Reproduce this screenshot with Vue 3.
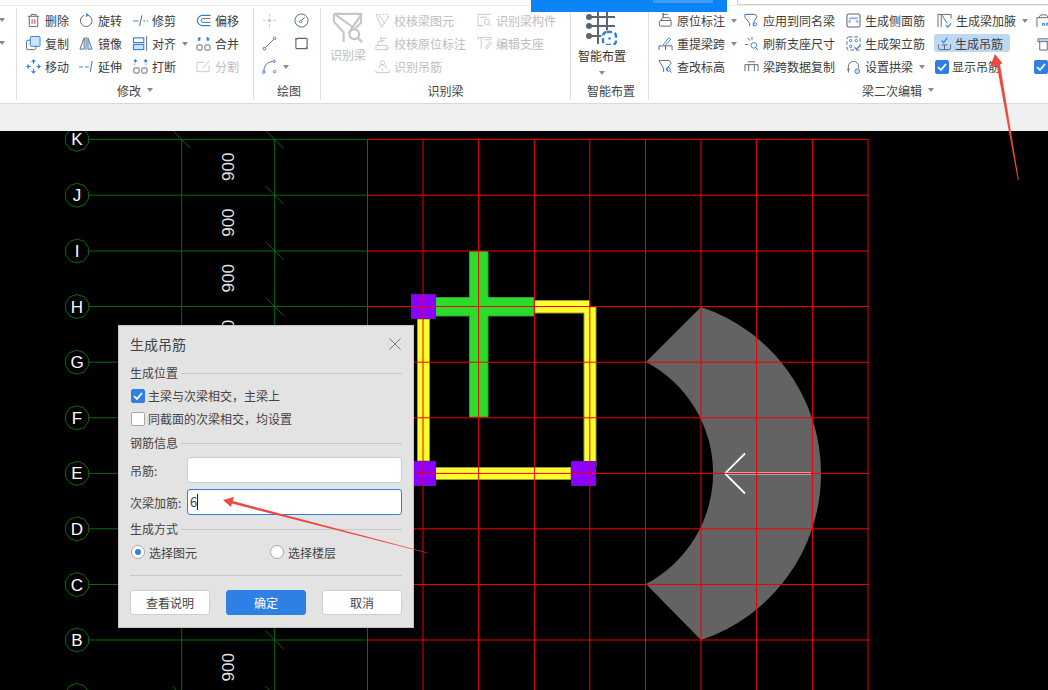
<script setup>
const B = '#2b80e6'
const icons = {
  del: `<path d="M2 3.5h12M5.5 3.5V1.5h5v2M3.5 3.5v11h9v-11"/><path stroke="#d8262c" d="M6.5 6.5v5M9.5 6.5v5"/>`,
  rotate: `<path d="M9.5 2.3A6.2 6.2 0 1 1 5.5 2.4"/><path fill="${B}" stroke="none" d="M7.5 0l3 2.2-3 2.2z"/>`,
  trim: `<path stroke="${B}" d="M0 8.5h6M11 8.5h2M14.5 8.5h1.5"/><path d="M9.5 2.5L7 14"/>`,
  offset: `<path stroke="${B}" stroke-width="1.2" d="M15.5 2.5H7a5.5 5.5 0 0 0 0 11h8.500"/><path d="M15.500 6H7.500a2 2 0 0 0 0 4h8"/>`,
  copy: `<rect x="0.500" y="4.500" width="10" height="10" rx="1.500"/><rect x="4.500" y="0.500" width="10.500" height="10.500" rx="1" fill="#cfe1f8" stroke="${B}"/>`,
  mirror: `<path d="M5.500 2L1 14h4.500zM7.500 1v14"/><path fill="#cfe1f8" stroke="${B}" d="M9.500 2L14 14H9.500z"/>`,
  align: `<rect x="0.500" y="2" width="11" height="5" stroke="${B}" stroke-width="1.200"/><rect x="0.500" y="9" width="11" height="5.500" fill="#cfe1f8" stroke="${B}" stroke-width="1.200"/><path d="M14.500 0v16"/>`,
  merge: `<rect x="1" y="9.500" width="5.500" height="5.500" rx="1"/><rect x="9.500" y="9.500" width="5.500" height="5.500" rx="1"/><path stroke="${B}" stroke-width="1.300" d="M2 2l2 2.500M4 1v3.500H2M14 2l-2 2.500M12 1v3.500h2"/>`,
  move: `<path stroke="${B}" stroke-width="1.200" d="M8 1v4M8 11v4M1 8h4M11 8h4M6 3l2-2 2 2M6 13l2 2 2-2M3 6L1 8l2 2M13 6l2 2-2 2"/>`,
  extend: `<path stroke="${B}" d="M0 8.500h4.500M6.500 8.500h4"/><path d="M14 2l-2 12"/>`,
  cut: `<rect x="1" y="9.500" width="5.500" height="5.500" rx="1"/><rect x="9.500" y="9.500" width="5.500" height="5.500" rx="1"/><path stroke="${B}" stroke-width="1.300" d="M4.500 2H1.500M3 .5L1.500 2 3 3.500M11.500 2h3M13 .5L14.500 2 13 3.500M1.500 5.500h1M13.500 5.500h1"/>`,
  split: `<path d="M9 3.500H1v10h13V7M7 10l7-8"/>`,
  point: `<path d="M8 1v3M8 12v3M1 8h3M12 8h3"/><circle cx="8" cy="8" r="1.800" fill="currentColor" stroke="none"/>`,
  circle: `<circle cx="8" cy="8" r="7"/><circle cx="7" cy="9" r="1.200" stroke="${B}"/><path d="M8 8l3.500-3.500"/>`,
  line: `<path d="M3.500 12.500L12.500 3.500"/><circle cx="2.500" cy="13.500" r="1.400" stroke="${B}"/><circle cx="13.500" cy="2.500" r="1.400" stroke="${B}"/>`,
  rect: `<rect x="2" y="2.500" width="12" height="11" rx="1" stroke-width="1.200"/><path stroke="${B}" stroke-width="2" d="M1.500 3h2M12.500 13h2"/>`,
  arc: `<path d="M2 13C2 7 6 3 11.500 2.500"/><circle cx="2" cy="14" r="1.300" stroke="${B}"/><circle cx="13" cy="2.500" r="1.300" stroke="${B}"/><circle cx="13.500" cy="13.500" r="1.300" stroke="${B}"/>`,
  bigfilter: `<g stroke-width="2.200"><path d="M2 2H30V11L22 19M2 2V10L12 21V31M4 3L22 16"/><path d="M30 3L17 22"/><circle cx="23" cy="23" r="5"/><path d="M27 27l4 4" stroke-width="2.600"/></g>`,
  chk1: `<path stroke-dasharray="2 1.500" d="M1 1.500h13v5"/><path d="M1 1.500L7 15l8-12M4 2l7 10"/>`,
  chk2: `<path d="M1 14.500V10h12v4.500zM3 10V6h5M6 6V1M6 2.500h6M6 5h4"/><path d="M11 14l1.500 1 2.500-3"/>`,
  hang: `<path d="M1 12v2.500h14V12M4 10a4 4 0 0 1 8 0"/><circle cx="8" cy="4" r="2.200"/><path d="M8 10v3"/>`,
  rec1: `<path d="M1 3V1.500h14M1 3v10.500h6M3 4.500h8"/><circle cx="10.500" cy="9.500" r="2.800"/><path d="M12.500 11.500l2.500 2.500"/>`,
  rec2: `<path d="M1 1.500h14M1 4V1.500M15 4V1.500M4.500 1.500v12M8 4h6M9 13l5-7 1.500 1.500-5 6.500z"/>`,
  smart: `<g stroke-width="2"><path d="M4 5h25M4 14h25M4 24h16M12 0v32M21 0v24"/></g><g fill="#5b6472" stroke="none"><circle cx="3" cy="5" r="3"/><circle cx="3" cy="14" r="3"/><circle cx="3" cy="24" r="3"/></g><circle cx="23" cy="26" r="6.500" fill="#fff" stroke="#fff" stroke-width="3"/><rect x="17" y="20" width="13" height="13" rx="4" stroke="${B}" stroke-width="2.400" stroke-dasharray="5 2.800"/><circle cx="23.500" cy="26.500" r="1.200" fill="${B}" stroke="none"/>`,
  orig: `<rect x="1.500" y="8" width="12.500" height="6" rx="1"/><path d="M3 8l2-3h7l2 3M5.500 5V0M5.500 1.500h5"/><path stroke="${B}" d="M5.500 0v4"/>`,
  same: `<path d="M1 1.500h11l2 2.500-4 6v4M1 1.500v3l5 6.500v3"/><circle cx="12" cy="12" r="1.600" stroke="${B}"/><path stroke="${B}" d="M4 1.500h5"/>`,
  side: `<rect x="1" y="1" width="14" height="14" rx="2" stroke-width="1.100"/><path stroke="${B}" d="M3.500 5.500h9M3.500 10.500v-2h2M12.500 10.500v-2h-2"/>`,
  add: `<path d="M1 15V1.500h14V6M4.500 15V2"/><path d="M5.500 2.500L11 11"/><path stroke="${B}" stroke-width="1.300" d="M9.500 13l2 2 3.500-4"/>`,
  lift: `<path d="M1 15v-4.500h14V15M8 10.500V15"/><path stroke="${B}" d="M5.500 9.500l6-7.500 2 1.500-6 7"/>`,
  refresh: `<path d="M1 9h3.500M4 2l2.500 3M8.500 1v3"/><circle cx="10.500" cy="10" r="3" stroke="${B}"/><path stroke="${B}" d="M12.500 12.500l2.500 2.500"/>`,
  stand: `<rect x="1" y="1" width="14" height="14" rx="2" stroke-dasharray="4 2"/><circle cx="5" cy="5" r="1.300" stroke="${B}"/><circle cx="11" cy="5" r="1.300" stroke="${B}"/><circle cx="5" cy="11" r="1.300" stroke="${B}"/><path stroke="${B}" stroke-width="1.300" d="M9 12l2 2 4-4"/>`,
  gen: `<path d="M1.500 9v3.500a2 2 0 0 0 2 2h9a2 2 0 0 0 2-2V9M8 9.500v5M5 9.500h6"/><path stroke="${B}" stroke-width="1.300" d="M5 5l2 2 4-5"/>`,
  check: `<path d="M1 1.500h11l2 3-4 5v3M1 1.500l5 8.500v4"/><circle cx="11" cy="11" r="2" stroke="${B}"/><path stroke="${B}" d="M12.500 12.500l2 2"/>`,
  copydata: `<path d="M1 13V6h14v7M5 6v7M11 6v7M4 3h8"/>`,
  arch: `<path d="M2.500 14.500V8a5.500 5.500 0 0 1 11 0v2M1 11h3"/><circle cx="12" cy="13" r="2.500" stroke="${B}" fill="#cfe1f8"/>`,
  edge1: `<path d="M1 15V5h14v10M3 5l2-3h6l2 3"/><path stroke="${B}" d="M7 11h2v2H7zM11 11h2v2h-2z"/>`,
  edge2: `<path d="M2 6V3h12v3zM4 6v9h8V6"/><path stroke="${B}" stroke-dasharray="1 1" d="M3 4.500h10"/>`
}

const I = (i, t, extra = {}) => ({ i, t, ...extra })
const modify = [
  I('del', '删除'), I('rotate', '旋转'), I('trim', '修剪'), I('offset', '偏移'),
  I('copy', '复制'), I('mirror', '镜像'), I('align', '对齐', { caret: true }), I('merge', '合并'),
  I('move', '移动'), I('extend', '延伸'), I('cut', '打断'), I('split', '分割', { off: true })
]
const draw = [
  I('point', '', { off: true }), I('circle', ''),
  I('line', ''), I('rect', ''),
  I('arc', '', { caret: true })
]
const recog = [
  I('chk1', '校核梁图元'), I('rec1', '识别梁构件'),
  I('chk2', '校核原位标注'), I('rec2', '编辑支座'),
  I('hang', '识别吊筋')
]
const edit = [
  I('orig', '原位标注', { caret: true }), I('same', '应用到同名梁'), I('side', '生成侧面筋'), I('add', '生成梁加腋', { caret: true }), I('edge1', ''),
  I('lift', '重提梁跨', { caret: true }), I('refresh', '刷新支座尺寸'), I('stand', '生成架立筋'), I('gen', '生成吊筋', { active: true }), I('edge2', ''),
  I('check', '查改标高'), I('copydata', '梁跨数据复制'), I('arch', '设置拱梁', { caret: true }), I('', '显示吊筋', { box: true }), I('', '', { box: true })
]

const ys = [139.4, 195.2, 251, 306.5, 362.2, 417.8, 473.4, 528.8, 584.5, 640]
const xs = [367.5, 423, 478.6, 534.4, 589.8, 645.5, 701, 756.6, 812.4, 868]
const gridY = [...ys, 695.5]
const letters = ['K', 'J', 'I', 'H', 'G', 'F', 'E', 'D', 'C', 'B', 'A']
const axes = letters.map((l, n) => {
  const y = gridY[n]
  const pts = Array.from({ length: 10 }, (_, k) => {
    const a = (Math.PI / 5) * k + Math.PI / 10
    return `${(77 + 12 * Math.cos(a)).toFixed(1)},${(y + 12 * Math.sin(a)).toFixed(1)}`
  }).join(' ')
  return { l, y, pts }
})
const dims = gridY.slice(0, -1).map((y, n) => (y + gridY[n + 1]) / 2 - 0.5)
const tickRows = gridY.map((y) => ({ x: 274.7, y })).concat([{ x: 181.7, y: 139.4 }, { x: 181.7, y: 695.5 }])
</script>

<template>
  <div class="app">
    <header class="head">
      <div class="tbar"><i></i></div>
      <div class="tinput"></div>
      <div class="ribbon">
        <section class="group g0">
          <span class="caret stub"></span>
          <span class="caret stub"></span>
        </section>

        <section class="group gmod">
          <div class="items">
            <div v-for="it in modify" :key="it.t" class="item" :class="{ off: it.off }">
              <svg class="ic" viewBox="0 0 16 16" v-html="icons[it.i]"></svg>
              <span>{{ it.t }}</span>
              <span v-if="it.caret" class="caret"></span>
            </div>
          </div>
          <div class="glabel">修改<span class="caret"></span></div>
        </section>

        <section class="group gdraw">
          <div class="items">
            <div v-for="it in draw" :key="it.i" class="item" :class="{ off: it.off }">
              <svg class="ic" viewBox="0 0 16 16" v-html="icons[it.i]"></svg>
              <span v-if="it.caret" class="caret"></span>
            </div>
          </div>
          <div class="glabel">绘图</div>
        </section>

        <section class="group grec">
          <div class="items">
            <div class="big off">
              <svg class="bigic" viewBox="0 0 32 32" v-html="icons.bigfilter"></svg>
              <span>识别梁</span>
            </div>
            <div v-for="it in recog" :key="it.t" class="item off">
              <svg class="ic" viewBox="0 0 16 16" v-html="icons[it.i]"></svg>
              <span>{{ it.t }}</span>
            </div>
          </div>
          <div class="glabel">识别梁</div>
        </section>

        <section class="group gsmart">
          <div class="big smart">
            <svg class="smartic" viewBox="0 0 32 33" v-html="icons.smart"></svg>
            <span>智能布置</span>
            <span class="caret"></span>
          </div>
          <div class="glabel">智能布置</div>
        </section>

        <section class="group gedit">
          <div class="items">
            <div
              v-for="(it, n) in edit"
              :key="n"
              class="item"
              :class="{ active: it.active, hasbox: it.box }"
            >
              <span v-if="it.box" class="box on">
                <svg viewBox="0 0 14 14"><path d="M3 7.200l3 2.800 5-6" /></svg>
              </span>
              <svg v-else class="ic" viewBox="0 0 16 16" v-html="icons[it.i]"></svg>
              <span v-if="it.t">{{ it.t }}</span>
              <span v-if="it.caret" class="caret"></span>
            </div>
          </div>
          <div class="glabel">梁二次编辑<span class="caret"></span></div>
        </section>
      </div>
      <div class="strip"></div>
    </header>

    <main class="canvas">
      <svg class="cad" viewBox="0 131 1048 559" width="1048" height="559">
        <path
          d="M701 307A175.500 175.500 0 0 1 701 640L646 584A125.400 125.400 0 0 0 646 362Z"
          fill="#636363"
        />
        <path d="M745 453.500L725 473.400L745 493.500" fill="none" stroke="#fff" stroke-width="1.800" />
        <path d="M725 472.600H811M725 474.200H811" stroke="#ddd" stroke-width="0.800" />

        <g fill="#2bdc2b" stroke="#3f9a2f" stroke-width="1">
          <path d="M469.500 251.500h18.500v46h46v18.500h-46v101h-18.500v-101h-34.500v-18.500h34.500z" />
        </g>
        <g fill="#ffff2e" stroke="#9a9a30" stroke-width="1">
          <path d="M534.500 300.500h55v6.500h6.500v160h-12v-154h-49.500z" />
          <rect x="417.500" y="319" width="12" height="142" />
          <rect x="435" y="467.500" width="136" height="12" />
        </g>
        <g fill="#8b00ff" stroke="#6f10b8" stroke-width="1">
          <rect x="411.500" y="294.500" width="24" height="24" />
          <rect x="411.500" y="461.500" width="24" height="24" />
          <rect x="571.500" y="461.500" width="24" height="24" />
        </g>

        <g stroke="#f20000" stroke-width="1">
          <line v-for="x in xs" :key="'v' + x" :x1="x" :x2="x" y1="139" y2="690" />
          <line v-for="y in ys" :key="'h' + y" x1="367" x2="868.500" :y1="y" :y2="y" />
        </g>

        <g stroke="#0a6a0a" stroke-width="1">
          <line x1="181.700" x2="181.700" y1="139" y2="690" />
          <line x1="274.700" x2="274.700" y1="139" y2="690" />
          <line v-for="a in axes" :key="'g' + a.l" x1="89" x2="367" :y1="a.y" :y2="a.y" />
          <line
            v-for="t in tickRows"
            :key="'t' + t.x + t.y"
            :x1="t.x - 9"
            :y1="t.y - 9"
            :x2="t.x + 9"
            :y2="t.y + 9"
          />
        </g>

        <g v-for="a in axes" :key="a.l">
          <polygon :points="a.pts" fill="none" stroke="#0a6a0a" stroke-width="1" />
          <text class="axis" x="77" :y="a.y + 6">{{ a.l }}</text>
        </g>
        <text
          v-for="y in dims"
          :key="'d' + y"
          class="dim"
          :transform="`translate(234 ${y}) rotate(-90)`"
        >900</text>
      </svg>

      <div class="dialog">
        <div class="dtitle">
          <span>生成吊筋</span>
          <svg class="close" viewBox="0 0 12 12"><path d="M.5 .5l11 11M11.500 .5l-11 11" /></svg>
        </div>

        <div class="legend"><span>生成位置</span><i></i></div>
        <label class="opt first"><span class="box on"><svg viewBox="0 0 14 14"><path d="M3 7.200l3 2.800 5-6" /></svg></span>主梁与次梁相交，主梁上</label>
        <label class="opt"><span class="box"></span>同截面的次梁相交，均设置</label>

        <div class="legend sec2"><span>钢筋信息</span><i></i></div>
        <div class="field f1"><span>吊筋:</span><div class="input"></div></div>
        <div class="field f2"><span>次梁加筋:</span><div class="input focus">6<b></b></div></div>

        <div class="legend sec3"><span>生成方式</span><i></i></div>
        <div class="radios">
          <label class="radio"><span class="dot on"></span>选择图元</label>
          <label class="radio"><span class="dot"></span>选择楼层</label>
        </div>

        <div class="rule"></div>
        <div class="btns">
          <button>查看说明</button>
          <button class="primary">确定</button>
          <button>取消</button>
        </div>
      </div>
    </main>

    <svg class="marks" viewBox="0 0 1048 690" width="1048" height="690">
      <path d="M995 54L1002.500 63.500L1000 64L1018.800 180L1017.800 180L996.800 65.500L990 66.500Z" fill="#f0483e" />
      <path d="M223 500L234 497L232.800 501L427 552.600L427 553L231.800 503.500L231 507Z" fill="#f0483e" />
    </svg>
  </div>
</template>

<style scoped>
.app {
  position: relative;
  width: 1048px;
  height: 690px;
  overflow: hidden;
  background: #000;
  font-family: "Noto Sans CJK SC", "Noto Sans", sans-serif;
  font-size: 12px;
  color: #3c3c3c;
}
.head {
  position: relative;
  height: 131px;
  background: #fff;
}
.tbar {
  position: absolute;
  left: 531px;
  top: 0;
  width: 196px;
  height: 12px;
  background: #0a84f7;
  z-index: 2;
}
.tbar i {
  position: absolute;
  left: 122px;
  top: 0;
  width: 60px;
  height: 3px;
  background: #3e9df3;
}
.tinput {
  position: absolute;
  left: 737px;
  top: -8px;
  width: 320px;
  height: 11px;
  border: 1px solid #cfcfcf;
  background: #fff;
  z-index: 2;
}
.ribbon {
  display: flex;
  height: 104px;
  box-sizing: border-box;
  padding-top: 8px;
  overflow: hidden;
  position: relative;
  background: linear-gradient(#fff 5px, #ececec 5px, #ececec 6px, #fff 6px) 0 0 / 100% 8px no-repeat;
  border-bottom: 1px solid #d9d9d9;
}
.group {
  flex: none;
  height: 92px;
  box-sizing: border-box;
  border-right: 1px solid #dcdcdc;
  position: relative;
  padding-top: 1px;
}
.g0 { width: 17px; display: flex; flex-direction: column; gap: 19px; padding-top: 10px; }
.gmod { width: 237px; padding-left: 9px; }
.gdraw { width: 67px; padding-left: 8px; }
.grec { width: 250px; padding-left: 9px; }
.gsmart { width: 78px; }
.gedit { width: 498px; padding-left: 9px; border-right: 0; }
.items {
  display: grid;
  grid-template-rows: repeat(3, 23px);
  height: 69px;
}
.gmod .items { grid-template-columns: 53px 54px 63px 60px; }
.gdraw .items { grid-template-columns: 32px 26px; }
.grec .items { grid-template-columns: 45px 102px 100px; }
.gedit .items { grid-template-columns: 86px 102px 91px 99px 30px; }
.item {
  display: flex;
  align-items: center;
  gap: 4px;
  white-space: nowrap;
  line-height: 16px;
  min-width: 0;
}
.item.off, .big.off { color: #bdbdbd; }
.item.hasbox { gap: 3px; margin-left: -2px; }
.item.active {
  position: relative;
  z-index: 0;
  gap: 3px;
}
.item.active::before {
  content: "";
  position: absolute;
  z-index: -1;
  left: -3px;
  width: 76px;
  top: 2px;
  height: 18px;
  border-radius: 3px;
  background: #bfd8f2;
}
.ic {
  flex: none;
  width: 15px;
  height: 15px;
  fill: none;
  stroke: currentColor;
  color: #5b6472;
  overflow: visible;
}
.off .ic, .off .bigic { color: #c6c6c6; }
.caret {
  display: inline-block;
  flex: none;
  width: 0;
  height: 0;
  margin-left: 2px;
  border-left: 3.500px solid transparent;
  border-right: 3.500px solid transparent;
  border-top: 4px solid #8a8a8a;
}
.caret.stub { margin-left: -1px; }
.big {
  grid-row: 1 / span 3;
  display: flex;
  flex-direction: column;
  align-items: flex-start;
  line-height: 16px;
}
.bigic {
  width: 31px;
  height: 31px;
  margin: 3px 0 4px 2px;
  fill: none;
  stroke: currentColor;
  flex: none;
}
.smart {
  align-items: center;
  color: #333;
  width: 62px;
  height: 69px;
}
.smartic {
  width: 32px;
  height: 33px;
  margin: 3px 0 3px;
  fill: none;
  stroke: #5b6472;
  flex: none;
}
.smart .caret { margin: 7px 0 0; }
.glabel {
  position: absolute;
  left: 0;
  right: 0;
  top: 69px;
  height: 26px;
  display: flex;
  align-items: center;
  justify-content: center;
  gap: 4px;
  color: #444;
}
.gdraw .glabel { padding-left: 4px; }
.gsmart .glabel { padding-left: 3px; }
.glabel .caret { margin-left: 2px; }
.strip { height: 27px; background: #f0f0f0; }

.box {
  flex: none;
  width: 14px;
  height: 14px;
  box-sizing: border-box;
  border-radius: 2px;
  background: #fff;
  border: 1px solid #a8a8a8;
  display: inline-flex;
}
.box.on { background: #2f80e4; border-color: #2f80e4; }
.box svg {
  width: 14px;
  height: 14px;
  margin: -1px;
  fill: none;
  stroke: #fff;
  stroke-width: 1.800;
}
.canvas { position: relative; height: 559px; background: #000; }
.cad { display: block; }
.axis {
  font: 17px "Liberation Sans", sans-serif;
  fill: #fff;
  text-anchor: middle;
}
.dim {
  font: 17px "Liberation Sans", sans-serif;
  fill: #e2e2e2;
  text-anchor: middle;
}
.dialog {
  position: absolute;
  left: 118px;
  top: 194px;
  width: 296px;
  height: 303px;
  box-sizing: border-box;
  padding: 0 11px 0 11px;
  background: #e3e3e3;
  border: 1px solid #c4c4c4;
  color: #444;
}
.dtitle {
  height: 38px;
  box-sizing: border-box;
  padding-bottom: 2px;
  display: flex;
  align-items: center;
  justify-content: space-between;
  font-size: 14px;
}
.close {
  width: 12px;
  height: 12px;
  fill: none;
  stroke: #7a7a7a;
  margin-right: 1px;
}
.legend {
  height: 18px;
  display: flex;
  align-items: center;
  gap: 3px;
}
.legend span { margin-bottom: 2px; }
.legend i { flex: 1; height: 1px; background: #c9c9c9; }
.sec2 { margin-top: 4px; }
.sec3 { margin-top: 5px; }
.opt {
  height: 23px;
  display: flex;
  align-items: center;
  gap: 3px;
  padding-left: 1px;
}
.opt.first { margin-top: 2px; }
.field {
  display: flex;
  align-items: center;
  height: 26px;
}
.f1 { margin-top: 5px; }
.f2 { margin-top: 6px; }
.field > span { width: 57px; flex: none; }
.input {
  flex: 1;
  height: 26px;
  box-sizing: border-box;
  background: #fff;
  border: 1px solid #cccccc;
  border-radius: 3px;
  padding-left: 2px;
  line-height: 24px;
  display: flex;
  align-items: center;
  font-size: 13px;
}
.input.focus { border-color: #2f80e4; }
.input b {
  display: block;
  width: 1px;
  height: 16px;
  background: #222;
}
.radios {
  display: grid;
  grid-template-columns: 139px 1fr;
  margin-top: 3px;
  height: 22px;
  padding-left: 1px;
}
.radio {
  display: flex;
  align-items: center;
  gap: 4px;
}
.dot {
  width: 14px;
  height: 14px;
  box-sizing: border-box;
  border-radius: 50%;
  border: 1px solid #a8a8a8;
  background: #fff;
  display: inline-block;
  position: relative;
}
.dot.on::after {
  content: "";
  position: absolute;
  left: 3px;
  top: 3px;
  width: 6px;
  height: 6px;
  border-radius: 50%;
  background: #2f80e4;
}
.rule { height: 1px; background: #c9c9c9; margin-top: 12px; }
.btns {
  display: flex;
  justify-content: space-between;
  margin-top: 14px;
}
button {
  width: 80px;
  height: 25px;
  padding: 0;
  font: inherit;
  color: #444;
  background: #fff;
  border: 1px solid #cfcfcf;
  border-radius: 3px;
}
button.primary {
  background: #2f80e4;
  border-color: #2f80e4;
  color: #fff;
}
.marks {
  position: absolute;
  left: 0;
  top: 0;
  pointer-events: none;
  z-index: 5;
}
</style>

<style>
html, body { margin: 0; background: #000; overflow: hidden; }
</style>
